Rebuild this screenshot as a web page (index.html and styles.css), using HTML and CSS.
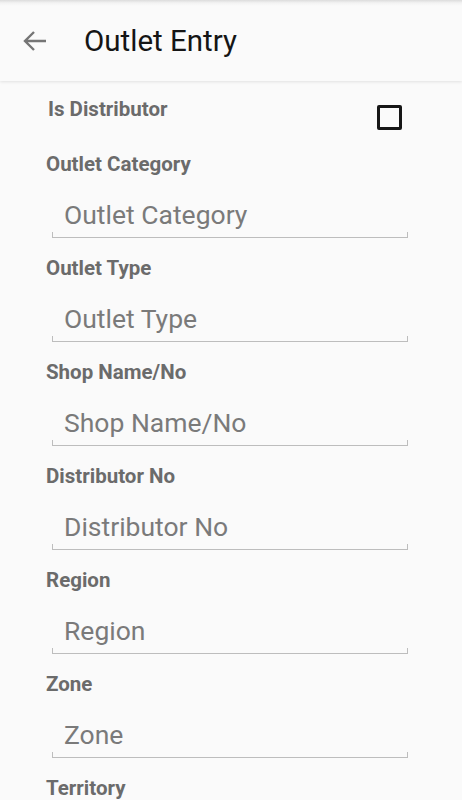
FILE: index.html
```html
<!DOCTYPE html>
<html>
<head>
<meta charset="utf-8">
<link rel="stylesheet" href="styles.css">
</head>
<body>
<header class="appbar">
  <svg class="back" width="26" height="24" viewBox="0 0 26 24"><path d="M24 12H3M12 3L3 12l9 9" fill="none" stroke="#757575" stroke-width="2.4"/></svg>
  <h1 class="title">Outlet Entry</h1>
</header>
<main class="form">
  <div class="check-row">
    <span class="label">Is Distributor</span>
    <span class="checkbox"></span>
  </div>
  <div class="field"><div class="label">Outlet Category</div><div class="input">Outlet Category</div></div>
  <div class="field"><div class="label">Outlet Type</div><div class="input">Outlet Type</div></div>
  <div class="field"><div class="label">Shop Name/No</div><div class="input">Shop Name/No</div></div>
  <div class="field"><div class="label">Distributor No</div><div class="input">Distributor No</div></div>
  <div class="field"><div class="label">Region</div><div class="input">Region</div></div>
  <div class="field"><div class="label">Zone</div><div class="input">Zone</div></div>
  <div class="field"><div class="label">Territory</div><div class="input">Territory</div></div>
</main>
</body>
</html>
```
FILE: styles.css
```css
html, body { margin: 0; padding: 0; }
body {
  width: 462px;
  height: 800px;
  overflow: hidden;
  background: #fafafa;
  font-family: Roboto, "Liberation Sans", sans-serif;
}
.appbar {
  position: relative;
  height: 81px;
  display: flex;
  align-items: center;
  background: linear-gradient(#dcdcdc 0, #f3f3f3 3px, #fafafa 6px);
  box-shadow: 0 1px 3px rgba(0,0,0,0.10);
  z-index: 1;
}
.back { margin-left: 22px; margin-top: 0; }
.title {
  margin: 0 0 0 36px;
  font-weight: 400;
  font-size: 29.5px;
  line-height: 34px;
  color: #151515;
}
.form { padding-left: 46px; }
.check-row {
  height: 71px;
  display: flex;
  justify-content: space-between;
  align-items: flex-start;
  padding: 0 60px 0 2px;
  box-sizing: border-box;
}
.check-row .label { margin-top: 16px; }
.checkbox {
  margin-top: 24px;
  width: 25px;
  height: 25px;
  box-sizing: border-box;
  border: 3px solid #161616;
  border-radius: 2px;
}
.label {
  font-weight: 700;
  font-size: 20.5px;
  line-height: 24px;
  color: #6b6b6b;
}
.field { height: 104px; }
.input {
  position: relative;
  margin-left: 6px;
  width: 356px;
  box-sizing: border-box;
  padding: 24px 0 7px 12px;
  height: 62px;
  font-size: 26.5px;
  line-height: 30px;
  color: #7a7a7a;
  border-bottom: 1px solid #bdbdbd;
}
.input::before, .input::after {
  content: "";
  position: absolute;
  bottom: 0;
  width: 1px;
  height: 5px;
  background: #bdbdbd;
}
.input::before { left: 0; }
.input::after { right: 0; }
```
